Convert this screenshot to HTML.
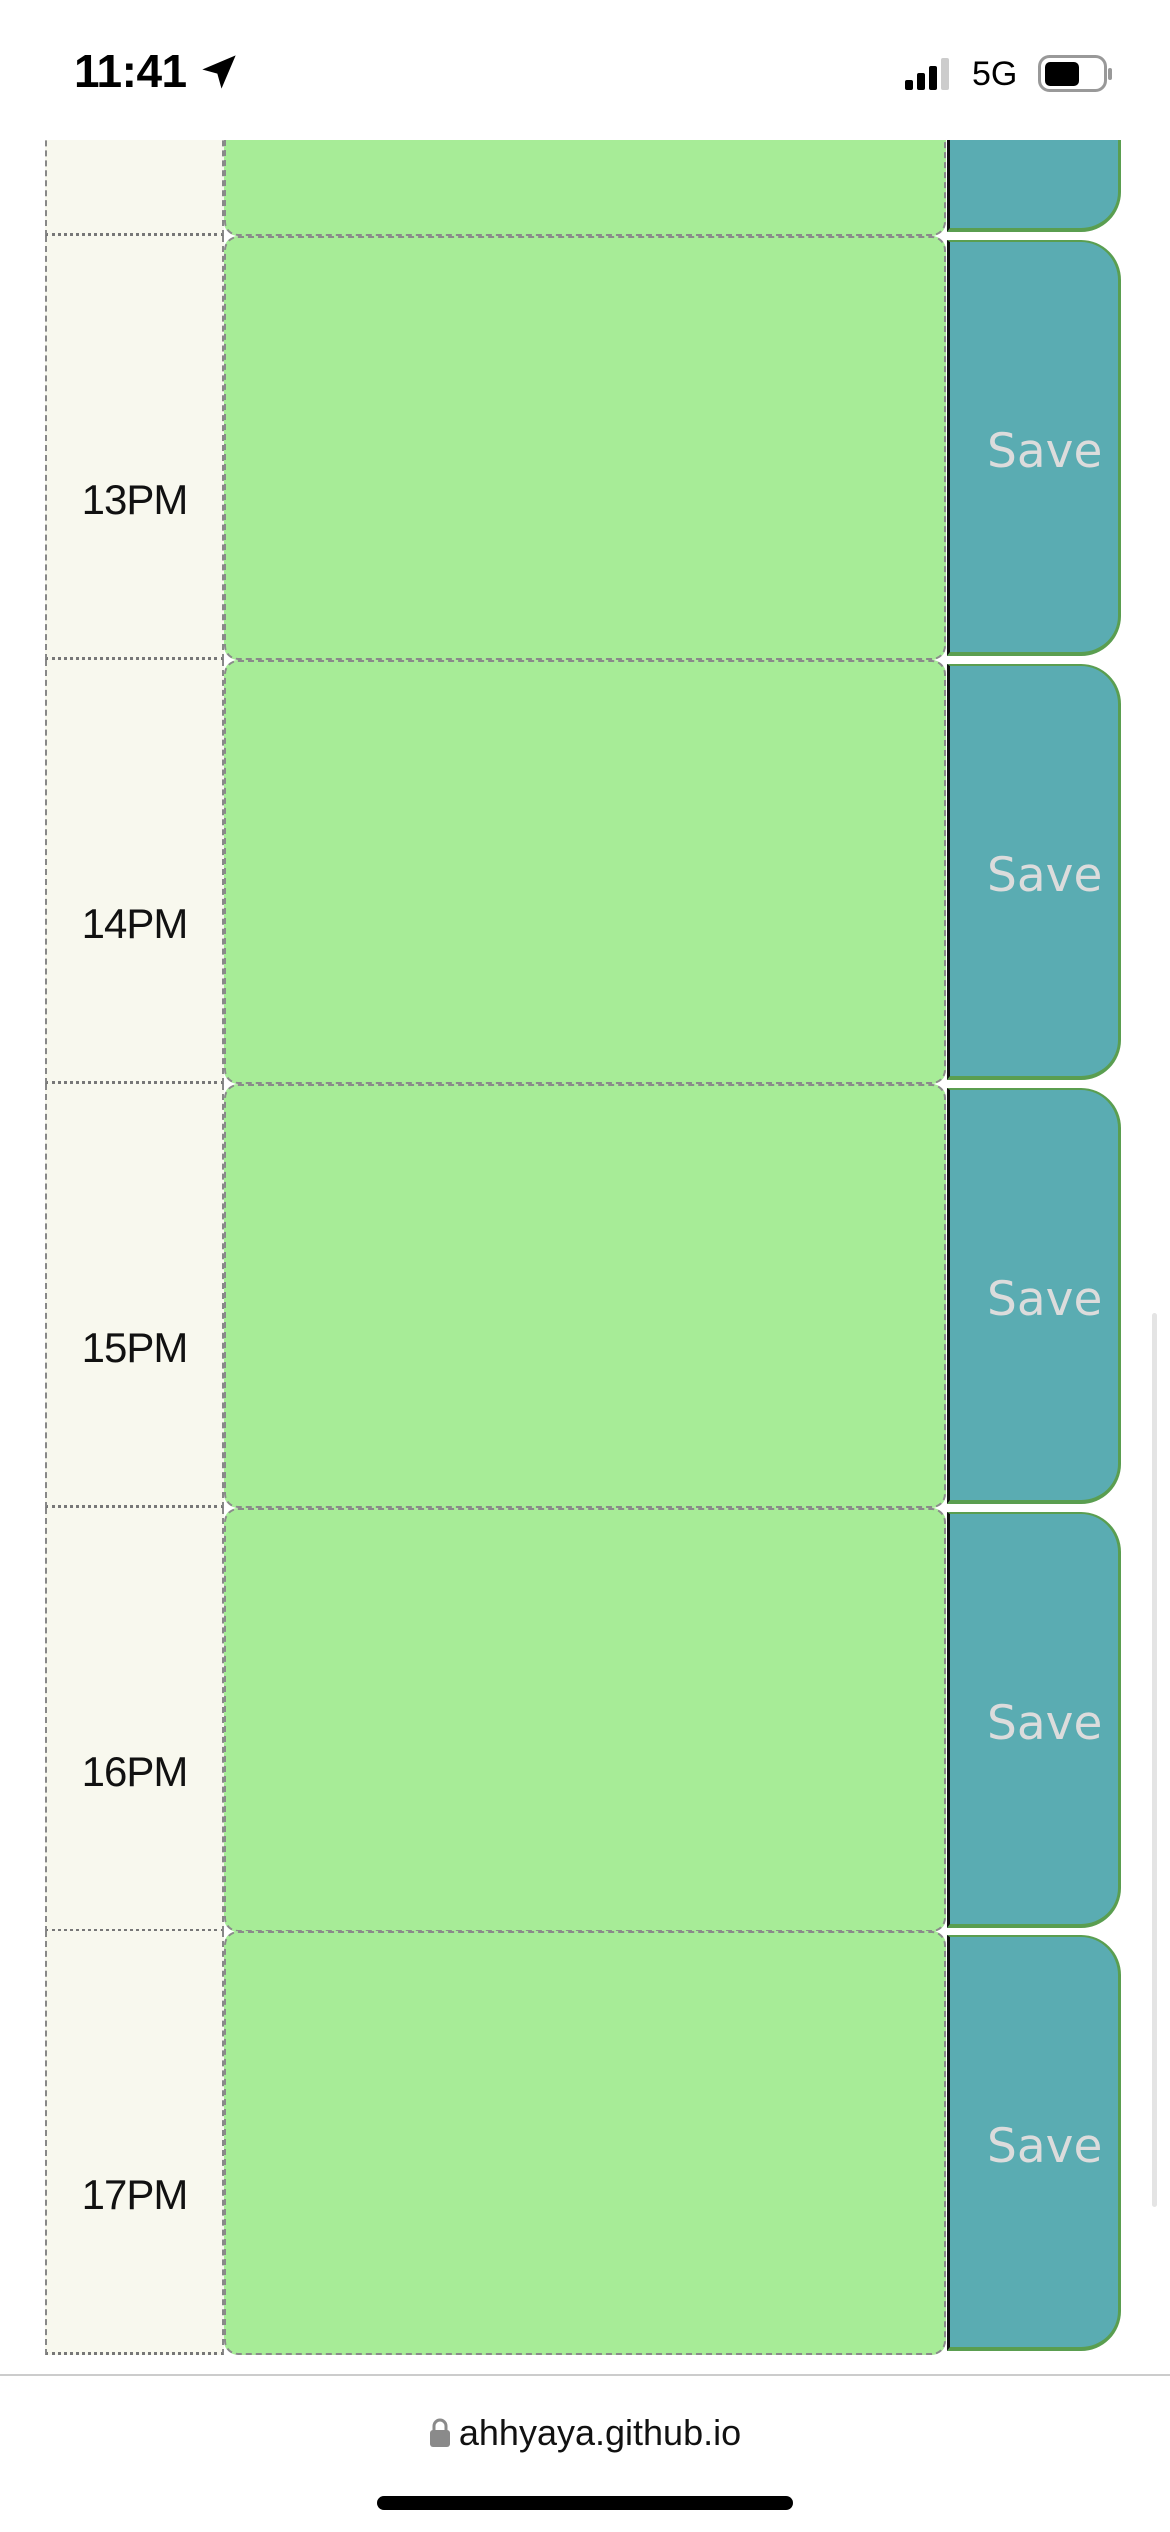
<!DOCTYPE html>
<html><head><meta charset="utf-8"><style>
*{margin:0;padding:0;box-sizing:border-box}
body{width:1170px;height:2532px;background:#fff;position:relative;overflow:hidden;font-family:"Liberation Sans",sans-serif}
.status{position:absolute;left:0;top:0;width:1170px;height:140px;background:#fff;z-index:5}
.time{position:absolute;left:74px;top:44px;font-size:46px;font-weight:bold;letter-spacing:-0.5px;color:#000}
.row{position:absolute;left:45px;width:1078px;height:424px}
.hour{position:absolute;left:0;top:0;width:179px;height:100%;background:#f8f8ee;border-left:2px dashed #888;border-bottom:3px dotted #777;border-right:2px dashed #888;font-size:42px;color:#111;text-align:center}
.hour span{position:absolute;left:0;right:0;top:240px;letter-spacing:-1px}
.ta{position:absolute;left:179px;top:0;width:722px;height:100%;background:#a7ec97;border:2px dashed #8a8a8a;border-radius:14px}
.btn{position:absolute;left:902px;top:4px;width:174px;height:416px;background:#5aacb2;border-left:3px solid #111;border-right:3px solid #5a9e50;border-bottom:4px solid #5a9e50;border-top:2px solid #5a9e50;border-radius:0 40px 40px 0;color:#dcdcdc;font-family:"DejaVu Sans",sans-serif;font-size:47px}
.btn span{position:absolute;left:37px;top:182px}
.bottom{position:absolute;left:0;top:2374px;width:1170px;height:158px;background:#fff;border-top:2px solid #ccc;z-index:5}
.url{position:absolute;left:0;right:0;top:36px;text-align:center;font-size:36px;color:#111}
.home{position:absolute;left:377px;top:120px;width:416px;height:14px;border-radius:7px;background:#000}
.scroll{position:absolute;left:1152px;top:1313px;width:5px;height:894px;border-radius:3px;background:#e4e4e4;z-index:4}
</style></head><body>
<div class="status">
<div class="time">11:41 <svg width="40" height="40" viewBox="0 0 24 24" style="vertical-align:-5px"><path d="M22 2L2 10.5l9 2.5 2.5 9z" fill="#000"/></svg></div>
<svg style="position:absolute;left:905px;top:58px" width="50" height="32"><rect x="0" y="22" width="8" height="10" rx="2"/><rect x="12" y="15" width="8" height="17" rx="2"/><rect x="24" y="8" width="8" height="24" rx="2"/><rect x="36" y="0" width="8" height="32" rx="2" fill="#ccc"/></svg>
<div style="position:absolute;left:972px;top:55px;font-size:34px;color:#000">5G</div>
<svg style="position:absolute;left:1038px;top:55px" width="76" height="38"><rect x="1.5" y="1.5" width="66" height="34" rx="10" fill="none" stroke="#999" stroke-width="3"/><rect x="7" y="7" width="34" height="24" rx="5" fill="#000"/><rect x="70" y="13" width="4" height="12" rx="2" fill="#999"/></svg>
</div>

<div class="row" style="top:-188px"><div class="hour"></div><div class="ta"></div><div class="btn"></div></div>
<div class="row" style="top:236px"><div class="hour"><span>13PM</span></div><div class="ta"></div><div class="btn"><span>Save</span></div></div>
<div class="row" style="top:660px"><div class="hour"><span>14PM</span></div><div class="ta"></div><div class="btn"><span>Save</span></div></div>
<div class="row" style="top:1084px"><div class="hour"><span>15PM</span></div><div class="ta"></div><div class="btn"><span>Save</span></div></div>
<div class="row" style="top:1508px"><div class="hour"><span>16PM</span></div><div class="ta"></div><div class="btn"><span>Save</span></div></div>
<div class="row" style="top:1931px"><div class="hour"><span>17PM</span></div><div class="ta"></div><div class="btn"><span>Save</span></div></div>

<div class="scroll"></div>
<div class="bottom">
<div class="url"><svg width="22" height="30" viewBox="0 0 22 30" style="vertical-align:-3px;margin-right:8px"><path d="M5 13V8a6 6 0 0112 0v5" fill="none" stroke="#8a8a8a" stroke-width="3"/><rect x="1" y="12" width="20" height="17" rx="3" fill="#8a8a8a"/></svg>ahhyaya.github.io</div>
<div class="home"></div>
</div>
</body></html>
